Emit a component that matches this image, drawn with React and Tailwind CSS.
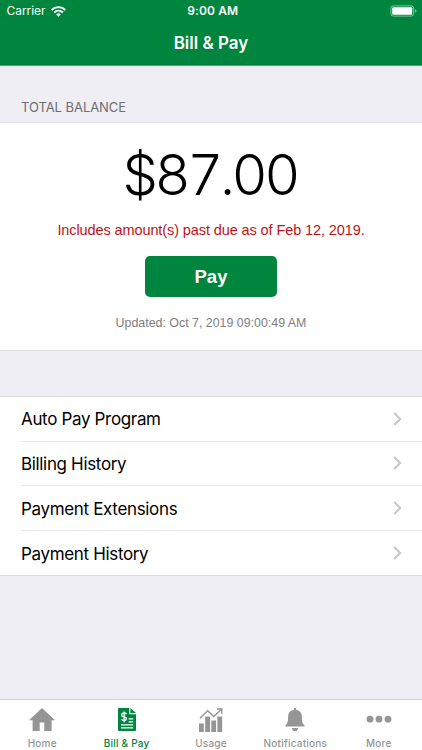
const HomeIcon = () => (
  <svg width="26" height="23" viewBox="0 0 26 23" fill="currentColor">
    <path d="M13 0 26 12.3H22.6V23H15.3V14.6H10.7V23H3.6V12.3H0Z" />
  </svg>
);

const BillIcon = () => (
  <svg width="18" height="23" viewBox="0 0 18 23">
    <path d="M1 0H11.2V6.2H18V22Q18 23 17 23H1Q0 23 0 22V1Q0 0 1 0Z" fill="currentColor" />
    <path d="M12.4 0 18 5.1H12.4Z" fill="currentColor" />
    <g fill="none" stroke="#fff" strokeWidth="1.3">
      <path d="M8.5 6.1Q7.8 5 6.1 5C2.9 5 2.9 8.7 6 8.9C9.2 9.2 9.1 12.6 6 12.6Q4 12.6 3.4 11.2M6.1 3.5V14.2" />
      <path d="M10.6 10.8H15.2M10.6 13.8H15.2M3 16.9H15.2M3 19.8H15.2" />
    </g>
  </svg>
);

const UsageIcon = () => (
  <svg width="24" height="24" viewBox="0 0 24 24">
    <path d="M0 15.5H4.8V24H0ZM6.2 8.5H11V24H6.2ZM12.3 12.5H17.1V24H12.3ZM18.4 8.5H23.2V24H18.4Z" fill="currentColor" />
    <path d="M1 10.3 8.7 2.7 14.7 8.5 22.3 1.5M17.8 1H22.8V6" fill="none" stroke="currentColor" strokeWidth="1.4" />
  </svg>
);

const BellIcon = () => (
  <svg width="20" height="24" viewBox="0 0 20 24" fill="currentColor">
    <path d="M8.8 1.2Q8.8 0 10 0T11.2 1.2V2C15 2.6 16.9 5.4 16.9 9C16.9 13.8 17.4 15.4 19.5 17.2V18.5H.5V17.2C2.6 15.4 3.1 13.8 3.1 9C3.1 5.4 5 2.6 8.8 2Z" />
    <path d="M7 20H13Q12.5 23.2 10 23.2T7 20Z" />
  </svg>
);

const MoreIcon = () => (
  <svg width="26" height="10" viewBox="0 0 26 10" fill="currentColor">
    <circle cx="4" cy="4.2" r="3.4" />
    <circle cx="13" cy="4.2" r="3.4" />
    <circle cx="22" cy="4.2" r="3.4" />
  </svg>
);

const WifiIcon = () => (
  <svg width="15" height="11" viewBox="0 0 15 11">
    <g fill="none" stroke="#fff" strokeWidth="1.8">
      <path d="M.7 4.1C4.5 .1 10.5 .1 14.3 4.1" />
      <path d="M3.1 6.5C5.6 4 9.4 4 11.9 6.5" />
    </g>
    <path d="M7.5 10.7 5.1 8.3Q7.5 6.3 9.9 8.3Z" fill="#fff" />
  </svg>
);

const BatteryIcon = () => (
  <svg width="27" height="12" viewBox="0 0 27 12">
    <rect x=".9" y=".9" width="22.7" height="10.2" rx="2.3" fill="none" stroke="#fff" strokeOpacity=".5" />
    <rect x="2.2" y="2.2" width="20" height="7.6" rx="1" fill="#fff" />
    <path d="M25 4.2Q26.6 4.7 26.6 6T25 7.8Z" fill="#fff" fillOpacity=".5" />
  </svg>
);

const Chevron = () => (
  <svg width="9" height="14" viewBox="0 0 9 14" fill="none" stroke="#c5c5ca" strokeWidth="2">
    <path d="M1.2 1 7.2 7 1.2 13" />
  </svg>
);

const links = ["Auto Pay Program", "Billing History", "Payment Extensions", "Payment History"];

const tabs = [
  { label: "Home", icon: HomeIcon },
  { label: "Bill & Pay", icon: BillIcon, active: true },
  { label: "Usage", icon: UsageIcon },
  { label: "Notifications", icon: BellIcon },
  { label: "More", icon: MoreIcon },
];

function Header() {
  return (
    <header className="h-[66px] border-b border-[#4ca56d] bg-[#00853e] text-white">
      <div className="grid h-[22px] grid-cols-3 items-center pr-[5px] pl-[6.5px] text-[12px] leading-none">
        <div className="flex items-center gap-[5.5px]">
          <span className="tracking-[-0.05px]">Carrier</span>
          <WifiIcon />
        </div>
        <span className="pl-[2px] text-center font-semibold tracking-[0.1px]">9:00 AM</span>
        <div className="flex justify-end">
          <BatteryIcon />
        </div>
      </div>
      <h1 className="text-center text-[17px] leading-[43px] font-semibold">Bill &amp; Pay</h1>
    </header>
  );
}

function Balance() {
  return (
    <section>
      <h2 className="h-[56px] pt-[31px] pl-[21px] text-[13px] leading-5 tracking-[-0.05px] text-[#6d6d72]">TOTAL BALANCE</h2>
      <div className="flex h-[229px] flex-col items-center border-y border-[#dfdfe3] bg-white font-['Liberation_Sans',sans-serif]">
        <p className="mt-[17px] pr-[2.5px] font-['Inter',sans-serif] text-[56px] leading-[70px] font-light tracking-[-3.5px] text-black tabular-nums [font-kerning:none]">
          $87.00
        </p>
        <p className="mt-[10px] text-[14.5px] leading-5 tracking-[-0.1px] text-[#c01218]">Includes amount(s) past due as of Feb 12, 2019.</p>
        <button type="button" className="mt-[16px] h-[41px] w-[132px] rounded-[5px] bg-[#00853e] text-[18.5px] font-bold text-white">
          Pay
        </button>
        <p className="mt-[16px] text-[12.4px] leading-5 text-[#808080]">Updated: Oct 7, 2019 09:00:49 AM</p>
      </div>
    </section>
  );
}

function LinkList() {
  return (
    <ul className="mt-[45px] h-[180px] border-y border-[#dcdce0] bg-white pl-[21px]">
      {links.map((label) => (
        <li key={label} className="flex h-[44.65px] items-center justify-between border-b border-[#e9e9eb] pr-[20px] last:border-b-0">
          <span className="pt-px text-[17px] leading-6 tracking-[-0.34px] text-black">{label}</span>
          <Chevron />
        </li>
      ))}
    </ul>
  );
}

function TabBar() {
  return (
    <nav className="mt-auto grid h-[51px] grid-cols-5 border-t border-[#cfcfd3] bg-white">
      {tabs.map(({ label, icon: Icon, active }) => (
        <a key={label} className={`flex flex-col items-center last:pr-[2px] ${active ? "text-[#00853e]" : "text-[#959595]"}`}>
          <span className="mt-[7px] flex h-[25px] items-center justify-center">
            <Icon />
          </span>
          <span className="mt-[4px] text-[10px] leading-[14px] font-medium tracking-[0.22px]">{label}</span>
        </a>
      ))}
    </nav>
  );
}

export default function App() {
  return (
    <div className="flex h-[750px] w-[422px] flex-col overflow-hidden bg-[#efeef4] font-['Inter',sans-serif]">
      <Header />
      <Balance />
      <LinkList />
      <TabBar />
    </div>
  );
}
